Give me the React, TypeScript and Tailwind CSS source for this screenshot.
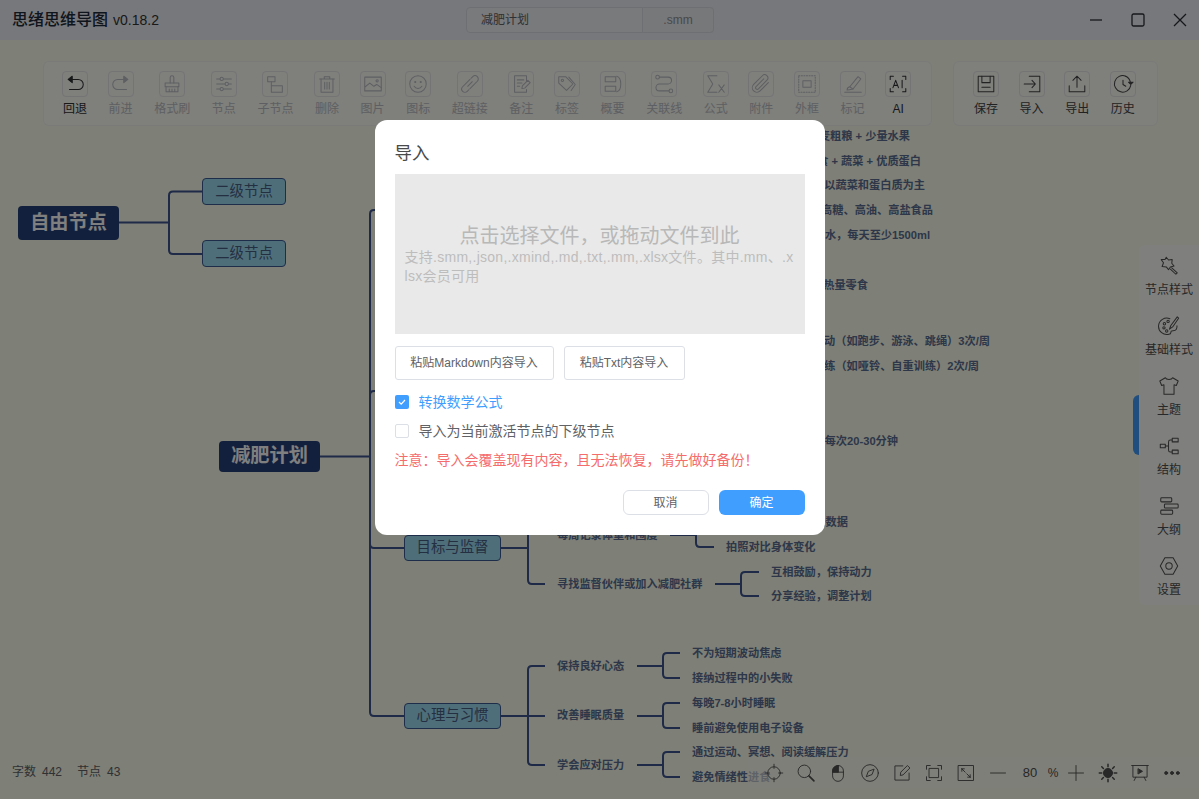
import type { ReactNode } from "react";

const bracket = (x0: number, y: number, xv: number, x1: number, ys: number[]) => {
  const r = 4;
  let d = `M${x0} ${y}H${xv}`;
  ys.forEach((t) => {
    if (t === y) {
      d += `M${xv} ${y}H${x1}`;
      return;
    }
    const s = t > y ? 1 : -1;
    d += `M${xv} ${y}V${t - s * r}Q${xv} ${t} ${xv + r} ${t}H${x1}`;
  });
  return d;
};

const lines = [
  bracket(119, 222.5, 169, 202, [191.5, 254]),
  bracket(320, 456.5, 370, 404, [210, 391, 548, 716]),
  bracket(501, 548, 528, 545, [530, 584]),
  bracket(670, 535, 696, 714, [522, 547]),
  bracket(715, 584, 741, 759, [572, 596]),
  bracket(501, 716, 528, 545, [666, 716, 765]),
  bracket(637, 666, 663, 680, [653, 678]),
  bracket(637, 716, 663, 680, [703, 728]),
  bracket(637, 765, 663, 680, [752, 777]),
];

const leaves = [
  { x: 557, y: 535, text: "每周记录体重和围度" },
  { x: 726, y: 547, text: "拍照对比身体变化" },
  { x: 557, y: 584, text: "寻找监督伙伴或加入减肥社群" },
  { x: 771, y: 572, text: "互相鼓励，保持动力" },
  { x: 771, y: 596, text: "分享经验，调整计划" },
  { x: 557, y: 666, text: "保持良好心态" },
  { x: 557, y: 715, text: "改善睡眠质量" },
  { x: 557, y: 765, text: "学会应对压力" },
  { x: 692, y: 653, text: "不为短期波动焦虑" },
  { x: 692, y: 678, text: "接纳过程中的小失败" },
  { x: 692, y: 703, text: "每晚7-8小时睡眠" },
  { x: 692, y: 728, text: "睡前避免使用电子设备" },
  { x: 692, y: 752, text: "通过运动、冥想、阅读缓解压力" },
  { x: 692, y: 777, text: "避免情绪性进食" },
];

// these run under the dialog, so they are anchored by their right end
const tails = [
  { right: 910, y: 136, text: "早餐：全麦粗粮 + 少量水果" },
  { right: 921, y: 161, text: "午餐：主食 + 蔬菜 + 优质蛋白" },
  { right: 925, y: 185, text: "晚餐：以蔬菜和蛋白质为主" },
  { right: 933, y: 210, text: "避免高糖、高油、高盐食品" },
  { right: 930, y: 235, text: "多喝水，每天至少1500ml" },
  { right: 868, y: 285, text: "减少高热量零食" },
  { right: 990, y: 341, text: "有氧运动（如跑步、游泳、跳绳）3次/周" },
  { right: 979, y: 366, text: "力量训练（如哑铃、自重训练）2次/周" },
  { right: 898, y: 441, text: "每次20-30分钟" },
  { right: 848, y: 522, text: "记录数据" },
];

const boxes = [
  { x: 202, y: 178, w: 84, h: 27, text: "二级节点" },
  { x: 202, y: 240, w: 84, h: 27, text: "二级节点" },
  { x: 404, y: 535, w: 97, h: 26, text: "目标与监督" },
  { x: 404, y: 703, w: 97, h: 26, text: "心理与习惯" },
];

const roots = [
  { x: 18, y: 206, w: 101, h: 34, text: "自由节点" },
  { x: 219, y: 441, w: 101, h: 31, text: "减肥计划" },
];

function MindMap() {
  return (
    <div className="absolute inset-0 bg-[#fcfeed]">
      <svg className="absolute inset-0" width="1199" height="799" fill="none" stroke="#3c5590">
        {lines.map((d) => (
          <path key={d} d={d} strokeWidth="2" />
        ))}
      </svg>
      {roots.map((n) => (
        <div
          key={n.text}
          className="absolute flex items-center justify-center rounded-[4px] bg-[#27417a] text-[19.2px] font-bold text-white"
          style={{ left: n.x, top: n.y, width: n.w, height: n.h }}
        >
          {n.text}
        </div>
      ))}
      {boxes.map((n) => (
        <div
          key={n.x + "-" + n.y}
          className="absolute flex items-center justify-center rounded-[4px] border-[1.5px] border-[#3c5a94] bg-[#9cdcf4] text-[14.4px] text-[#4a5f85]"
          style={{ left: n.x, top: n.y, width: n.w, height: n.h }}
        >
          {n.text}
        </div>
      ))}
      {leaves.map((n) => (
        <div
          key={n.text}
          className="absolute whitespace-nowrap text-[11.2px] leading-4 font-bold text-[#5a6f92]"
          style={{ left: n.x, top: n.y - 8 }}
        >
          {n.text}
        </div>
      ))}
      {tails.map((n) => (
        <div
          key={n.text}
          className="absolute whitespace-nowrap text-[11.2px] leading-4 font-bold text-[#5a6f92]"
          style={{ right: 1199 - n.right, top: n.y - 8 }}
        >
          {n.text}
        </div>
      ))}
    </div>
  );
}

function Ico({ size = 24, children }: { size?: number; children: ReactNode }) {
  return (
    <svg
      width={size}
      height={size}
      viewBox="0 0 24 24"
      fill="none"
      stroke="currentColor"
      strokeWidth="1.100"
      strokeLinecap="round"
      strokeLinejoin="round"
    >
      {children}
    </svg>
  );
}

const toolIcons: Record<string, ReactNode> = {
  回退: (
    <>
      <path d="M8 7h7.500a5.500 5.500 0 0 1 0 11H6" />
      <path d="M9 3.500 4.500 7 9 10.500Z" fill="currentColor" />
    </>
  ),
  前进: (
    <>
      <path d="M16 7H8.500a5.500 5.500 0 0 0 0 11H18" />
      <path d="M15 3.500 19.500 7 15 10.500Z" fill="currentColor" />
    </>
  ),
  格式刷: (
    <>
      <path d="M10 11V5a2 2 0 0 1 4 0v6" />
      <path d="M4.500 11h15v4h-15z" />
      <path d="M5.500 15v5.500h13V15M9 17.500v3M12 17.500v3M15 17.500v3" />
    </>
  ),
  节点: (
    <>
      <path d="M4 6.500h16M4 12h16M4 17.500h16" />
      <circle cx="9.500" cy="6.500" r="1.800" fill="#fff" />
      <circle cx="15" cy="12" r="1.800" fill="#fff" />
      <circle cx="9.500" cy="17.500" r="1.800" fill="#fff" />
    </>
  ),
  子节点: (
    <>
      <path d="M4 4h8v5.500H4z" />
      <path d="M8 9.500V14h12v7H8z" />
    </>
  ),
  删除: (
    <>
      <path d="M4 6.500h16M9 6.500v-2.500h6v2.500" />
      <path d="M5.500 6.500V21h13V6.500" />
      <path d="M9.500 10v7.500M12 10v7.500M14.500 10v7.500" />
    </>
  ),
  图片: (
    <>
      <path d="M3 4.500h18v15H3z" />
      <path d="m3.500 15 5-4 4.500 3.500 3-2 5 3.500" />
      <circle cx="16.500" cy="8.500" r="1.200" />
    </>
  ),
  图标: (
    <>
      <circle cx="12" cy="12" r="9" />
      <path d="M7.800 14.500a5 5 0 0 0 8.400 0" />
      <circle cx="9" cy="9.800" r=".6" fill="currentColor" />
      <circle cx="15" cy="9.800" r=".6" fill="currentColor" />
    </>
  ),
  超链接: (
    <>
      <path d="m13 6 2-2a3.500 3.500 0 0 1 5 5l-8 8" />
      <path d="m11 18-2 2a3.500 3.500 0 0 1-5-5l8-8" />
      <path d="m9.500 14.500 5-5" />
    </>
  ),
  备注: (
    <>
      <path d="M18 9V3H5v18h13v-3" />
      <path d="M8 7.500h7M8 11h5M8 14.500h2.500" />
      <path d="m13 17 .5-3 6-6 2.500 2.500-6 6z" />
    </>
  ),
  标签: (
    <>
      <path d="M3 4h7.500l8 8-7 7-8.500-8z" />
      <path d="m14 4.500 7 8-4.500 6.500" />
      <circle cx="7" cy="8" r="1.300" />
    </>
  ),
  概要: (
    <>
      <path d="M3.500 4h11.500v5.500H3.500zM3.500 14.500h11.500V20H3.500z" />
      <path d="M16 3.500c6 1.500 6 15.500 0 17" />
    </>
  ),
  关联线: (
    <>
      <circle cx="5" cy="4.500" r="2" />
      <circle cx="19.500" cy="19.500" r="2" />
      <path d="M7 4.500h9.500a3.500 3.500 0 0 1 0 7.500H7a3.700 3.700 0 0 0 0 7.500h10.500" />
    </>
  ),
  公式: (
    <>
      <path d="M13 3H3l5.500 9L3 21h10" />
      <path d="m15 13 6 8M21 13l-6 8" />
    </>
  ),
  附件: (
    <path d="M20 10.500 11 19.500a4.800 4.800 0 0 1-7-7l9.500-9.500a3.400 3.400 0 0 1 5 4.800l-9.300 9.500a1.700 1.700 0 0 1-2.600-2.500l8.400-8.400" />
  ),
  外框: (
    <>
      <path d="M3 3h18v18H3z" strokeDasharray="1.200 1.600" />
      <path d="M7.500 8.500h9v7h-9z" />
    </>
  ),
  标记: (
    <>
      <path d="m8.500 15 9-11 3 2.500-8.500 11z" />
      <path d="M8.500 15c-2 .5-3 2-3 3.500 1.500 0 3-.2 6.500-1" />
      <path d="M3 21h18" />
    </>
  ),
  AI: (
    <>
      <path d="M7 3.500H3.500V7M17 3.500h3.500V7M7 20.500H3.500V17M17 20.500h3.500V17" />
      <path d="m6.500 16 3-8 3 8M7.500 13.500h4M16.500 8v8" />
    </>
  ),
  保存: (
    <>
      <path d="M3.500 3.500h17v17h-17z" />
      <path d="M7.500 3.500v7h9v-7M7.500 15.500h9" />
    </>
  ),
  导入: (
    <>
      <path d="M9 3.500h11.500v17H9" />
      <path d="M3.500 12h12M12 8l3.700 4-3.700 4" />
    </>
  ),
  导出: (
    <>
      <path d="M12 15.500V4M7.500 8 12 3.500 16.500 8" />
      <path d="M3.500 14v6.500h17V14" />
    </>
  ),
  历史: (
    <>
      <path d="M20.500 13.500A9 9 0 1 1 15 3.500" />
      <path d="M15 3.500a9 9 0 0 1 5 6.500" />
      <path d="M12 8v4.500l3 2" />
      <path d="m18 10 2.500 2.500L23 10z" fill="currentColor" />
    </>
  ),
};

const editTools = [
  { label: "回退", color: "text-[#303133]" },
  { label: "前进" },
  { label: "格式刷" },
  { label: "节点" },
  { label: "子节点" },
  { label: "删除" },
  { label: "图片" },
  { label: "图标" },
  { label: "超链接" },
  { label: "备注" },
  { label: "标签" },
  { label: "概要" },
  { label: "关联线" },
  { label: "公式" },
  { label: "附件" },
  { label: "外框" },
  { label: "标记" },
  { label: "AI", color: "text-[#303133]" },
];

const fileTools = ["保存", "导入", "导出", "历史"];

function ToolItem({ label, color }: { label: string; color?: string }) {
  return (
    <div className={"flex flex-col items-center " + (color ?? "text-[#bcbec4]")}>
      <div className="flex h-[26px] w-[26px] items-center justify-center rounded-[4px] border border-[#e9e9e9]">
        <Ico size={22}>{toolIcons[label]}</Ico>
      </div>
      <div className="mt-1 text-xs leading-4 whitespace-nowrap">{label}</div>
    </div>
  );
}

const sideIcons: Record<string, ReactNode> = {
  节点样式: (
    <>
      <path d="m9 2.500 2.500 3 4-.5-.5 4 2.500 3-4 1-2 3-2.500-3-4.500-.5 1.500-4-2.500-3.500 4.200-.2z" />
      <path d="m15 14 6 5.500-1.500 1.500-6-5.500" />
    </>
  ),
  基础样式: (
    <>
      <path d="M13 4A9 9 0 1 0 12 21c3 0 1.500-2.500 2.500-3.500 1.200-1 4 .5 5.500-2 .6-1.200.8-2.500.7-3.800" />
      <circle cx="7" cy="9.500" r="1.300" />
      <circle cx="11" cy="7" r="1.300" />
      <circle cx="6.500" cy="14" r="1.300" />
      <circle cx="9.500" cy="17.500" r="1.300" />
      <path d="m21 2-7 9.500 -1.500 4 3.500-2.500L22.500 3.500z" />
    </>
  ),
  主题: (
    <path d="M8 3 2 6.500 4 11.500l2.500-.8V21h11V10.700l2.500.8 2-5L16 3c-1 2.500-7 2.500-8 0z" />
  ),
  结构: (
    <>
      <path d="M2.500 10h5.500v4H2.500zM15.500 3.500H22v4h-6.500zM15.500 16.500H22v4h-6.500z" />
      <path d="M8 12h3.500M15.500 5.500H13.500a2 2 0 0 0-2 2v9a2 2 0 0 0 2 2h2" />
    </>
  ),
  大纲: (
    <>
      <rect x="3" y="3" width="12" height="4.500" rx="1" />
      <rect x="7" y="9.800" width="15" height="4.500" rx="1" />
      <rect x="3" y="16.500" width="13" height="4.500" rx="1" />
    </>
  ),
  设置: (
    <>
      <path d="M7.500 3h9l5 9-5 9h-9l-5-9z" />
      <circle cx="12" cy="12" r="3.500" />
    </>
  ),
};

function Sidebar() {
  return (
    <div className="absolute top-[245px] right-0 w-[60px] rounded-l-[6px] bg-white/70">
      <div className="absolute top-[150px] -left-[6px] h-[60px] w-[6px] rounded-l-[6px] bg-[#409eff]" />
      {Object.keys(sideIcons).map((k) => (
        <div key={k} className="flex h-[60px] flex-col items-center pt-2.5 text-[#505050]">
          <Ico size={22}>{sideIcons[k]}</Ico>
          <div className="mt-[5px] text-xs leading-4 whitespace-nowrap">{k}</div>
        </div>
      ))}
    </div>
  );
}

const Nav = ({ children }: { children: ReactNode }) => (
  <div className="flex h-5 w-5 items-center justify-center">
    <Ico size={20}>{children}</Ico>
  </div>
);

function BottomBar() {
  return (
    <div className="absolute top-[757px] right-0 flex h-[31px] w-[451px] items-center gap-3 bg-[#fdfdf6]/60 pl-4 text-[#505050]">
      <Nav>
        <circle cx="12" cy="12" r="7.500" />
        <path d="M12 1.500v5M12 17.500v5M1.500 12h5M17.500 12h5" />
      </Nav>
      <Nav>
        <circle cx="10" cy="10" r="7.500" />
        <path d="m15.500 15.500 6 6" strokeWidth="2" />
      </Nav>
      <Nav>
        <rect x="5.500" y="3" width="13" height="19" rx="6.500" />
        <path d="M5.500 11h13M12 3v8" />
        <path d="M12 3a6.500 6.500 0 0 0-6.500 6.500V11H12z" fill="currentColor" />
      </Nav>
      <Nav>
        <circle cx="12" cy="12" r="10" />
        <path d="m16.500 7.500-6.500 2.500-2.500 6.500 6.500-2.500z" />
      </Nav>
      <Nav>
        <path d="M20.500 12v8.500h-17v-17H13" />
        <path d="m10 14.500.5-3.500 8-8 3 3-8 8z" />
      </Nav>
      <Nav>
        <path d="M3 7.500V3h4.500M16.500 3H21v4.500M21 16.500V21h-4.500M7.500 21H3v-4.500" />
        <path d="M6.500 6.500h11v11h-11z" />
      </Nav>
      <Nav>
        <path d="M3 3h18v18H3z" />
        <path d="m7 7 4 4M7 7v3M7 7h3M17 17l-4-4M17 17v-3M17 17h-3" />
      </Nav>
      <Nav>
        <path d="M3 12h18" />
      </Nav>
      <div className="w-5 text-center text-[13px]">80</div>
      <div className="-mx-[9px] w-5 text-center text-xs">%</div>
      <Nav>
        <path d="M3 12h18M12 3v18" />
      </Nav>
      <Nav>
        <circle cx="12" cy="12" r="5.500" fill="currentColor" />
        <path d="M12 1.500v3M12 19.500v3M1.500 12h3M19.500 12h3M4.500 4.500l2 2M17.500 17.500l2 2M4.500 19.500l2-2M17.500 6.500l2-2" strokeWidth="1.800" />
      </Nav>
      <Nav>
        <path d="M2 3h20M3.500 3v14h17V3" />
        <path d="m10 7 5 3-5 3z" fill="currentColor" />
        <path d="m7 17-2 4M17 17l2 4" />
      </Nav>
      <Nav>
        <circle cx="5" cy="12" r="1.800" fill="currentColor" />
        <circle cx="12" cy="12" r="1.800" fill="currentColor" />
        <circle cx="19" cy="12" r="1.800" fill="currentColor" />
      </Nav>
    </div>
  );
}

function ImportDialog() {
  return (
    <div className="absolute inset-0 flex justify-center bg-black/50">
      <div className="mt-[120px] flex h-[415px] w-[450px] flex-col rounded-xl bg-white px-5 pt-[21px]">
        <div className="text-[17.5px] leading-6 text-[#4a4a4a]">导入</div>
        <div className="mt-[9px] h-40 bg-[#e9e9e9] px-2.5 pt-[50px]">
          <div className="text-center text-[20px] leading-6 text-[#b8b8b8]">点击选择文件，或拖动文件到此</div>
          <div className="text-sm leading-[19px] tracking-[0.27px] break-all text-[#bdbdbd]">
            支持.smm,.json,.xmind,.md,.txt,.mm,.xlsx文件。其中.mm、.xlsx会员可用
          </div>
        </div>
        <div className="mt-3 flex gap-2.5">
          <button className="h-[34px] w-[159px] rounded-[3px] border border-[#dcdfe6] text-xs text-[#606266]">
            粘贴Markdown内容导入
          </button>
          <button className="h-[34px] w-[121px] rounded-[3px] border border-[#dcdfe6] text-xs text-[#606266]">
            粘贴Txt内容导入
          </button>
        </div>
        <label className="mt-3 flex h-5 items-center gap-2.5 text-[14px] text-[#409eff]">
          <span className="flex h-3.5 w-3.5 items-center justify-center rounded-[2px] bg-[#409eff] text-white">
            <svg width="10" height="10" viewBox="0 0 10 10" fill="none" stroke="currentColor" strokeWidth="1.200">
              <path d="m2 5 2.200 2.200L8 3" />
            </svg>
          </span>
          转换数学公式
        </label>
        <label className="mt-[9px] flex h-5 items-center gap-2.5 text-[14px] text-[#606266]">
          <span className="h-3.5 w-3.5 rounded-[2px] border border-[#dcdfe6] bg-white" />
          导入为当前激活节点的下级节点
        </label>
        <div className="mt-[9px] text-[14px] leading-5 whitespace-nowrap text-[#f56c6c]">
          注意：导入会覆盖现有内容，且无法恢复，请先做好备份！
        </div>
        <div className="mt-5 flex justify-end gap-2.5">
          <button className="h-[25px] w-[86px] rounded-md border border-[#dcdfe6] text-xs text-[#606266]">取消</button>
          <button className="h-[25px] w-[86px] rounded-md bg-[#409eff] text-xs text-white">确定</button>
        </div>
      </div>
    </div>
  );
}

export default function App() {
  return (
    <div className="relative h-[799px] w-[1199px] overflow-hidden font-['Liberation_Sans','Noto_Sans_CJK_SC',sans-serif]">
      <MindMap />

      <div className="relative grid h-10 grid-cols-[466px_248px_1fr] items-center bg-[#ecf0f7]">
        <div className="flex items-baseline pl-3 text-[#1f2a3a]">
          <span className="text-base font-medium">思绪思维导图</span>
          <span className="ml-[5px] text-sm text-[#333]">v0.18.2</span>
        </div>
        <div className="flex h-[26px] text-xs text-[#606266]">
          <div className="flex w-[177px] items-center rounded-l-[4px] border border-[#dcdfe6] bg-[#f3f5f9] pl-3.5">减肥计划</div>
          <div className="flex flex-1 items-center justify-center rounded-r-[4px] border border-l-0 border-[#dcdfe6] bg-[#eef0f5] text-[#909399]">
            .smm
          </div>
        </div>
        <div className="flex items-center justify-end gap-[28px] pr-3 text-[#2b2f36]">
          <svg width="14" height="14" viewBox="0 0 14 14" fill="none" stroke="currentColor" strokeWidth="1.300">
            <path d="M1 7h12" />
          </svg>
          <svg width="14" height="14" viewBox="0 0 14 14" fill="none" stroke="currentColor" strokeWidth="1.300">
            <rect x="1" y="1" width="12" height="12" rx="1.500" />
          </svg>
          <svg width="14" height="14" viewBox="0 0 14 14" fill="none" stroke="currentColor" strokeWidth="1.300">
            <path d="m1 1 12 12M13 1 1 13" />
          </svg>
        </div>
      </div>

      <div className="relative flex gap-[21px] pt-[21px] pl-[43px]">
        <div className="flex w-[889px] gap-[21.6px] rounded-[6px] border border-[#eeeeee]/60 bg-white/60 pt-[9px] pb-2 pl-[19px]">
          {editTools.map((t) => (
            <div key={t.label} className={"flex justify-center " + (t.label.length === 3 ? "w-9" : "w-6")}>
              <ToolItem label={t.label} color={t.color} />
            </div>
          ))}
        </div>
        <div className="flex w-[205px] gap-[21.6px] rounded-[6px] border border-[#eeeeee]/60 bg-white/60 pt-[9px] pb-2 pl-5">
          {fileTools.map((t) => (
            <div key={t} className="flex w-6 justify-center">
              <ToolItem label={t} color="text-[#444444]" />
            </div>
          ))}
        </div>
      </div>

      <Sidebar />

      <div className="absolute top-[764px] left-0 flex gap-[15px] pl-3 text-xs leading-4 text-[#606266]">
        <div>
          字数<span className="ml-1.5">442</span>
        </div>
        <div>
          节点<span className="ml-1.5">43</span>
        </div>
      </div>

      <BottomBar />
      <ImportDialog />
    </div>
  );
}
